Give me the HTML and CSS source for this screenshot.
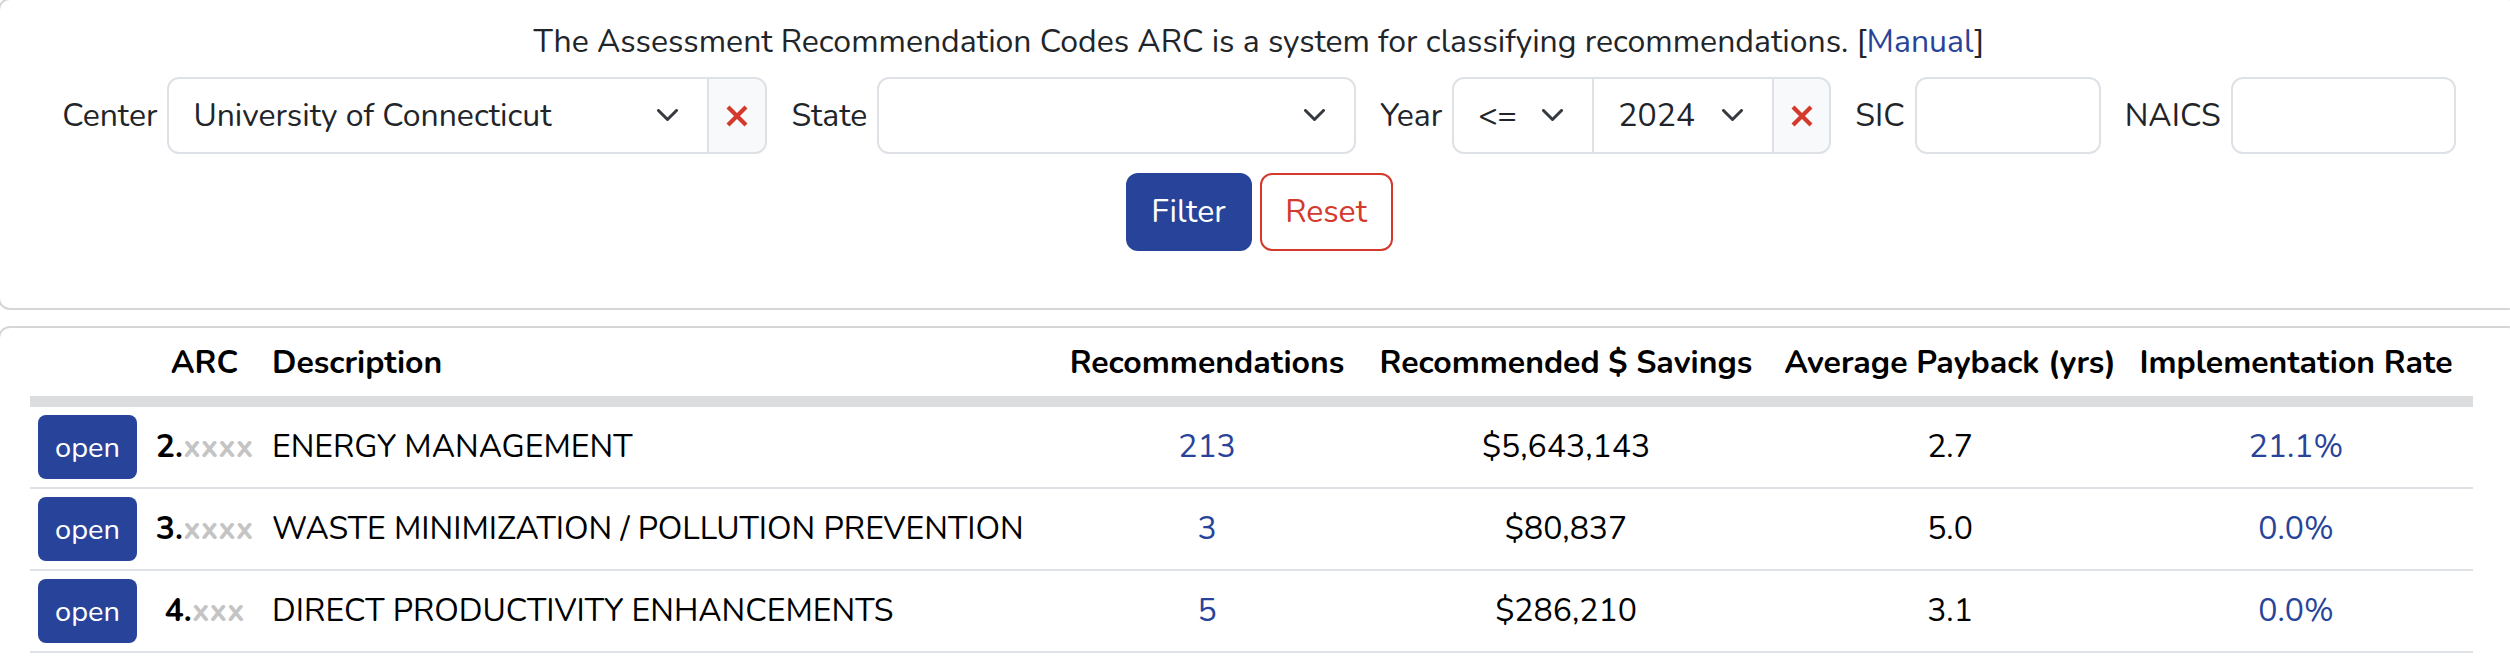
FILE: index.html
```html
<!DOCTYPE html>
<html lang="en">
<head>
<meta charset="utf-8">
<title>ARC</title>
<link rel="stylesheet" href="styles.css">
</head>
<body>
<div class="card filter-card">
  <p class="intro">The Assessment Recommendation Codes ARC is a system for classifying recommendations. [<a class="link" href="#">Manual</a>]</p>
  <div class="filters">
    <span class="lbl first">Center</span>
    <div class="group">
      <div class="select w-center"><span>University of Connecticut</span><svg class="chev" viewBox="0 0 21 13"><polyline points="1.5,1.5 10.5,10.5 19.5,1.5"/></svg></div>
      <div class="clear w-clear1"><svg class="x" viewBox="0 0 22 22"><path d="M2 2 L20 20 M20 2 L2 20"/></svg></div>
    </div>
    <span class="lbl">State</span>
    <div class="group">
      <div class="select w-state"><span></span><svg class="chev" viewBox="0 0 21 13"><polyline points="1.5,1.5 10.5,10.5 19.5,1.5"/></svg></div>
    </div>
    <span class="lbl">Year</span>
    <div class="group">
      <div class="select w-op"><span>&lt;=</span><svg class="chev" viewBox="0 0 21 13"><polyline points="1.5,1.5 10.5,10.5 19.5,1.5"/></svg></div>
      <div class="select w-year"><span>2024</span><svg class="chev" viewBox="0 0 21 13"><polyline points="1.5,1.5 10.5,10.5 19.5,1.5"/></svg></div>
      <div class="clear w-clear2"><svg class="x" viewBox="0 0 22 22"><path d="M2 2 L20 20 M20 2 L2 20"/></svg></div>
    </div>
    <span class="lbl">SIC</span>
    <div class="group">
      <div class="input w-sic"></div>
    </div>
    <span class="lbl">NAICS</span>
    <div class="group">
      <div class="input w-naics"></div>
    </div>
  </div>
  <div class="actions">
    <button class="btn btn-filter">Filter</button>
    <button class="btn btn-reset">Reset</button>
  </div>
</div>

<div class="card table-card">
  <table class="arc-table">
    <colgroup>
      <col class="c-open"><col class="c-arc"><col class="c-desc"><col class="c-rec"><col class="c-sav"><col class="c-pay"><col class="c-rate">
    </colgroup>
    <thead>
      <tr>
        <th></th>
        <th class="center">ARC</th>
        <th class="left">Description</th>
        <th class="center">Recommendations</th>
        <th class="center">Recommended $ Savings</th>
        <th class="center">Average Payback (yrs)</th>
        <th class="center">Implementation Rate</th>
      </tr>
    </thead>
    <tbody>
      <tr>
        <td><button class="open">open</button></td>
        <td class="center arc">2.<span class="xs">xxxx</span></td>
        <td class="left">ENERGY MANAGEMENT</td>
        <td class="center blue">213</td>
        <td class="center">$5,643,143</td>
        <td class="center">2.7</td>
        <td class="center blue">21.1%</td>
      </tr>
      <tr>
        <td><button class="open">open</button></td>
        <td class="center arc">3.<span class="xs">xxxx</span></td>
        <td class="left">WASTE MINIMIZATION / POLLUTION PREVENTION</td>
        <td class="center blue">3</td>
        <td class="center">$80,837</td>
        <td class="center">5.0</td>
        <td class="center blue">0.0%</td>
      </tr>
      <tr>
        <td><button class="open">open</button></td>
        <td class="center arc">4.<span class="xs">xxx</span></td>
        <td class="left">DIRECT PRODUCTIVITY ENHANCEMENTS</td>
        <td class="center blue">5</td>
        <td class="center">$286,210</td>
        <td class="center">3.1</td>
        <td class="center blue">0.0%</td>
      </tr>
    </tbody>
  </table>
</div>
</body>
</html>
```
FILE: styles.css
```css
html, body {
  margin: 0;
  padding: 0;
  overflow: hidden;
  background: #fff;
}
body {
  font-family: "Nunito", "Lato", "Open Sans", sans-serif;
  font-size: 32px;
  line-height: 48px;
  color: #212529;
}
.card {
  box-sizing: border-box;
  border: 2px solid #d6d6d6;
  border-radius: 12px;
  background: #fff;
  margin-left: -2px;
  width: calc(100% + 12px);
}
.filter-card {
  margin-top: -2px;
  padding: 18px 0 57px;
}
.intro {
  margin: 0 0 11px;
  text-align: center;
}
.link {
  color: #28449a;
  text-decoration: none;
}
.filters {
  display: flex;
  justify-content: center;
  align-items: center;
  height: 77px;
}
.lbl {
  margin: 0 10px 0 24px;
  white-space: nowrap;
}
.lbl.first { margin-left: 0; }
.group {
  display: flex;
  height: 77px;
}
.select, .input, .clear {
  box-sizing: border-box;
  height: 77px;
  border: 2px solid #dee2e6;
  background: #fff;
}
.group > * + * { margin-left: -2px; }
.group > *:first-child { border-radius: 12px 0 0 12px; }
.group > *:last-child { border-radius: 0 12px 12px 0; }
.group > *:only-child { border-radius: 12px; }
.select {
  display: flex;
  align-items: center;
  justify-content: space-between;
  padding: 0 29px 0 24px;
  white-space: nowrap;
}
.chev {
  width: 21px;
  height: 13px;
  flex: none;
}
.chev polyline {
  fill: none;
  stroke: #343a40;
  stroke-width: 3;
  stroke-linecap: round;
  stroke-linejoin: round;
}
.clear {
  display: flex;
  align-items: center;
  justify-content: center;
  background: #f8f9fa;
}
.x {
  width: 22px;
  height: 22px;
}
.x path {
  stroke: #d4392c;
  stroke-width: 4.2;
  fill: none;
}
.w-center { width: 542px; }
.w-clear1 { width: 60px; }
.w-state { width: 479px; }
.w-op { width: 142px; }
.w-year { width: 182px; }
.w-clear2 { width: 59px; }
.w-sic { width: 186px; }
.w-naics { width: 225px; }

.actions {
  display: flex;
  justify-content: center;
  gap: 8px;
  margin-top: 19px;
}
.btn {
  box-sizing: border-box;
  height: 78px;
  border-radius: 12px;
  font: inherit;
  padding: 0;
  cursor: pointer;
}
.btn-filter {
  width: 126px;
  background: #28449a;
  border: 2px solid #28449a;
  color: #fff;
}
.btn-reset {
  width: 133px;
  background: #fff;
  border: 2px solid #d4392c;
  color: #d4392c;
}

.table-card {
  margin-top: 16px;
  padding: 0 0 40px 30px;
}
.arc-table {
  table-layout: fixed;
  width: 2443px;
  border-collapse: collapse;
  color: #000;
}
.c-open { width: 115px; }
.c-arc { width: 119px; }
.c-desc { width: 799px; }
.c-rec { width: 288px; }
.c-sav { width: 430px; }
.c-pay { width: 338px; }
.c-rate { width: 354px; }
.arc-table th {
  font-weight: 700;
  padding: 11px 0 9px;
  white-space: nowrap;
}
.arc-table thead tr {
  border-bottom: 11px solid #dcdddf;
}
.arc-table td {
  padding: 8px 0;
  height: 64px;
  white-space: nowrap;
  vertical-align: middle;
}
.arc-table tbody tr {
  border-bottom: 2px solid #dee2e6;
}
.arc-table .left { text-align: left; padding-left: 8px; }
.arc-table .center { text-align: center; }
.arc-table .blue { color: #28449a; }
.arc { font-weight: 700; }
.xs { color: #c4c4c4; }
.open {
  box-sizing: border-box;
  margin-left: 8px;
  width: 99px;
  height: 64px;
  border: 0;
  border-radius: 8px;
  background: #28449a;
  color: #fff;
  font-family: inherit;
  font-size: 29px;
  line-height: 1;
  padding: 0;
  display: block;
}
```
